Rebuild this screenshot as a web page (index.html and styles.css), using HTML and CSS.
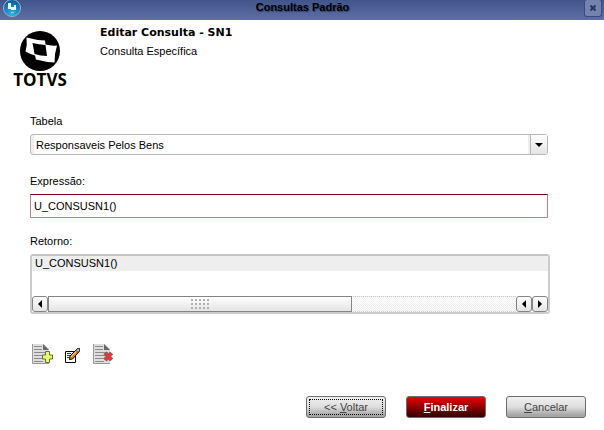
FILE: index.html
```html
<!DOCTYPE html>
<html lang="pt-BR">
<head>
    <meta charset="utf-8">
    <title>Consultas Padrão</title>
    <link rel="stylesheet" href="styles.css">
</head>
<body>
    <header class="titulo">
        <svg class="titulo-icone" width="18" height="18" viewBox="0 0 18 18" aria-hidden="true">
            <defs>
                <radialGradient id="globo" cx="50%" cy="80%" r="75%">
                    <stop offset="0" stop-color="#35b5ee"/>
                    <stop offset="1" stop-color="#075a9c"/>
                </radialGradient>
            </defs>
            <circle cx="9" cy="8" r="8.500" fill="url(#globo)" stroke="#a3b5c8"/>
            <path d="M5 3h3v4h3V5h2v5H8V9H5z" fill="#e8f6ff"/>
            <path d="M8 12h3v1H8z" fill="#8fd6f7"/>
        </svg>
        <h1>Consultas Padrão</h1>
        <button type="button" class="fechar" aria-label="Fechar">
            <svg width="6" height="6" viewBox="0 0 6 6"><path d="M.5.5l5 5M5.500.5l-5 5" stroke="#27365a" stroke-width="2"/></svg>
        </button>
    </header>

    <div class="cabecalho">
        <div class="logo">
            <svg width="40" height="40" viewBox="0 0 40 40" aria-hidden="true">
                <circle cx="20" cy="20" r="20" fill="#000"/>
                <path d="M6.500 6.500Q15 9 25 9.500L25.500 13.500Q31 15 37 14.500Q34.500 22 34.500 31.500Q25 31 16 28.500L15 24.500Q10 23 5.500 20.500Q7.500 14 6.500 6.500z" fill="#fff"/>
                <path d="M12.500 12Q19 13.500 25.500 14L27 25Q20.500 25 14.500 23z" fill="#000"/>
            </svg>
            <span>TOTVS</span>
        </div>
        <div class="descricao">
            <h2>Editar Consulta - SN1</h2>
            <p>Consulta Específica</p>
        </div>
    </div>

    <form class="formulario">
        <div class="campo">
            <label for="tabela">Tabela</label>
            <div class="combo">
                <select id="tabela">
                    <option>Responsaveis Pelos Bens</option>
                </select>
                <span class="seta"></span>
            </div>
        </div>

        <div class="campo">
            <label for="expressao">Expressão:</label>
            <input type="text" id="expressao" value="U_CONSUSN1()">
        </div>

        <div class="campo">
            <label for="retorno">Retorno:</label>
            <div class="lista">
                <select id="retorno" size="2">
                    <option>U_CONSUSN1()</option>
                </select>
                <div class="rolagem">
                    <button type="button" aria-label="Rolar para a esquerda"><svg width="4" height="8" viewBox="0 0 4 8"><path d="M4 0v8L0 4z"/></svg></button>
                    <div class="trilho"><div class="barra"><span class="pega"></span></div></div>
                    <button type="button" aria-label="Rolar para a esquerda"><svg width="4" height="8" viewBox="0 0 4 8"><path d="M4 0v8L0 4z"/></svg></button>
                    <button type="button" aria-label="Rolar para a direita"><svg width="4" height="8" viewBox="0 0 4 8"><path d="M0 0v8l4-4z"/></svg></button>
                </div>
            </div>
        </div>

        <div class="ferramentas">
            <button type="button" aria-label="Incluir">
                <svg width="21" height="20" viewBox="0 0 21 20">
                    <path d="M0 0h12l5 5v15H0z" fill="#dedede"/>
                    <path d="M.5 0v19.500H17" fill="none" stroke="#999"/>
                    <path d="M11 0l6 6h-6z" fill="#666"/>
                    <path d="M2 2.500h8M2 5.500h8M2 8.500h13M2 11.500h13M2 14.500h11M2 17.500h9" stroke="#8c8c8c"/>
                    <path d="M13.500 7.500h4V11H20.500v4H17.500v3.500H13.500V15H10.500v-4h3z" fill="#e9f96c" stroke="#666b3c"/>
                </svg>
            </button>
            <button type="button" aria-label="Editar">
                <svg width="16" height="18" viewBox="0 0 16 18">
                    <path d="M.5 5.500h10v11H.5z" fill="#fff" stroke="#000"/>
                    <path d="M2 7.500h4M2 9.500h3M2 11.500h2" stroke="#2222e0"/>
                    <path d="M4.500 13.500l.5-3.500L12.500 2.500h2v2.500L7.500 13z" fill="#f58220" stroke="#000"/>
                    <path d="M11 4.500l1.500-2h2v2.500l-1.500 1.500z" fill="#c4bcb4" stroke="#333"/>
                    <path d="M6 11l5-5.500" stroke="#ffc890"/>
                </svg>
            </button>
            <button type="button" aria-label="Excluir">
                <svg width="21" height="20" viewBox="0 0 21 20">
                    <path d="M0 0h12l5 5v15H0z" fill="#dedede"/>
                    <path d="M.5 0v19.500H17" fill="none" stroke="#999"/>
                    <path d="M11 0l6 6h-6z" fill="#666"/>
                    <path d="M2 2.500h8M2 5.500h8M2 8.500h13M2 11.500h13M2 14.500h11M2 17.500h9" stroke="#8c8c8c"/>
                    <path d="M12 9l6.500 7M18.500 9L12 16" stroke="#777" stroke-width="4.500"/>
                    <path d="M12 9l6.500 7M18.500 9L12 16" stroke="#e13a3a" stroke-width="3"/>
                </svg>
            </button>
        </div>
    </form>

    <footer class="botoes">
        <button type="button" class="botao foco">&lt;&lt; <u>V</u>oltar</button>
        <button type="button" class="botao finalizar"><u>F</u>inalizar</button>
        <button type="button" class="botao"><u>C</u>ancelar</button>
    </footer>
</body>
</html>
```

FILE: styles.css
```css
* {
    box-sizing: border-box;
}

body {
    margin: 0;
    background: #fff;
    color: #000;
    font: 11px/14px "Liberation Sans", Arial, sans-serif;
}

h1, h2, p {
    margin: 0;
}

button, input, select {
    margin: 0;
    padding: 0;
    color: inherit;
    font: inherit;
}

/* barra de titulo */
.titulo {
    display: grid;
    grid-template-columns: 18px 1fr 18px;
    align-items: start;
    height: 20px;
    padding: 0 2px 0 3px;
    background: linear-gradient(#40558b, #5f6fa4);
}

.titulo h1 {
    font-size: 11px;
    line-height: 15px;
    text-align: center;
    text-shadow: 1px 1px 1px #2b3c68;
}

.fechar {
    display: flex;
    align-items: center;
    justify-content: center;
    width: 18px;
    height: 17px;
    border: 1px solid #344c80;
    border-top: 0;
    border-radius: 3px;
    background: #7482ae;
}

/* logo e descricao */
.cabecalho {
    display: flex;
    gap: 32px;
    padding: 6px 12px 0;
}

.logo {
    display: flex;
    flex-direction: column;
    align-items: center;
    width: 56px;
    padding-top: 5px;
    font: bold 17px/18px "Open Sans", sans-serif;
}

.descricao h2 {
    margin-bottom: 4px;
    font: bold 11px/14px "DejaVu Sans", Verdana, sans-serif;
}

/* formulario */
.formulario {
    padding: 25px 54px 0 30px;
}

.campo {
    min-height: 44px;
    margin-bottom: 16px;
}

.campo label {
    display: block;
    margin-bottom: 6px;
}

.combo {
    display: grid;
    grid-template-columns: 1fr 17px;
    height: 21px;
    margin-right: 2px;
    border: 1px solid #b8b8b8;
    border-radius: 3px;
    background: #fff;
    box-shadow: inset 3px 0 #eee;
}

.combo select {
    grid-area: 1 / 1 / 2 / 3;
    padding: 0 22px 0 5px;
    border: 0;
    background: none;
    appearance: none;
}

.seta {
    display: flex;
    grid-area: 1 / 2 / 2 / 3;
    align-items: center;
    justify-content: center;
    border-left: 1px solid #b8b8b8;
    background: linear-gradient(#fff, #e4e4e4);
    box-shadow: -2px 0 #eee;
    pointer-events: none;
}

.seta::after {
    content: "";
    border: 4px solid transparent;
    border-top-color: #000;
    border-bottom: 0;
}

#expressao {
    display: block;
    width: calc(100% - 2px);
    height: 24px;
    padding: 0 3px;
    border: 1px solid #c88088;
    border-top-color: #800010;
}

/* lista com barra de rolagem */
.lista {
    border: 2px solid #ccc;
    border-top-color: #c4c4c4;
    border-radius: 3px;
}

#retorno {
    display: block;
    width: 100%;
    height: 40px;
    border: 0;
    background: #fff;
    outline: 0;
    overflow: hidden;
}

#retorno option {
    height: 15px;
    min-height: 15px;
    padding: 1px 3px 0;
    background: #eee;
    line-height: 14px;
}

.rolagem {
    display: flex;
    height: 16px;
}

.rolagem button {
    display: flex;
    align-items: center;
    justify-content: center;
    width: 16px;
    border: 1px solid #858585;
    border-radius: 3px;
    background: linear-gradient(#fff, #e4e4e4);
}

.trilho {
    flex: 1;
    border: dotted #ccc;
    border-width: 1px 0;
    background: repeating-conic-gradient(#eee 0 25%, #fff 0 50%) 0 0 / 2px 2px;
}

.barra {
    display: flex;
    align-items: center;
    justify-content: center;
    width: 65%;
    height: 16px;
    margin-top: -1px;
    border: 1px solid #858585;
    background: linear-gradient(#fff, #e4e4e4);
}

.pega {
    width: 19px;
    height: 11px;
    background: radial-gradient(circle at 1px 1px, #b0b0b0 1px, #0000 1px) 0 0 / 4px 4px;
}

/* icones de acao */
.ferramentas {
    display: flex;
    align-items: flex-end;
    gap: 12px;
    margin-top: 30px;
    padding-left: 2px;
}

.ferramentas button {
    display: flex;
    border: 0;
    background: none;
}

/* botoes do rodape */
.botoes {
    display: flex;
    justify-content: flex-end;
    gap: 20px;
    padding: 32px 18px 12px;
}

.botao {
    width: 80px;
    height: 22px;
    border: 1px solid #6a6e70;
    border-radius: 3px;
    background: linear-gradient(#f0f0f0 0%, #dedede 50%, #a6a6a6 90%);
    color: #444;
}

.foco {
    outline: 1px dotted #000;
    outline-offset: -4px;
}

.finalizar {
    background: linear-gradient(#ee0000, #900000 50%, #300000);
    color: #fff;
    font-weight: bold;
}
```
